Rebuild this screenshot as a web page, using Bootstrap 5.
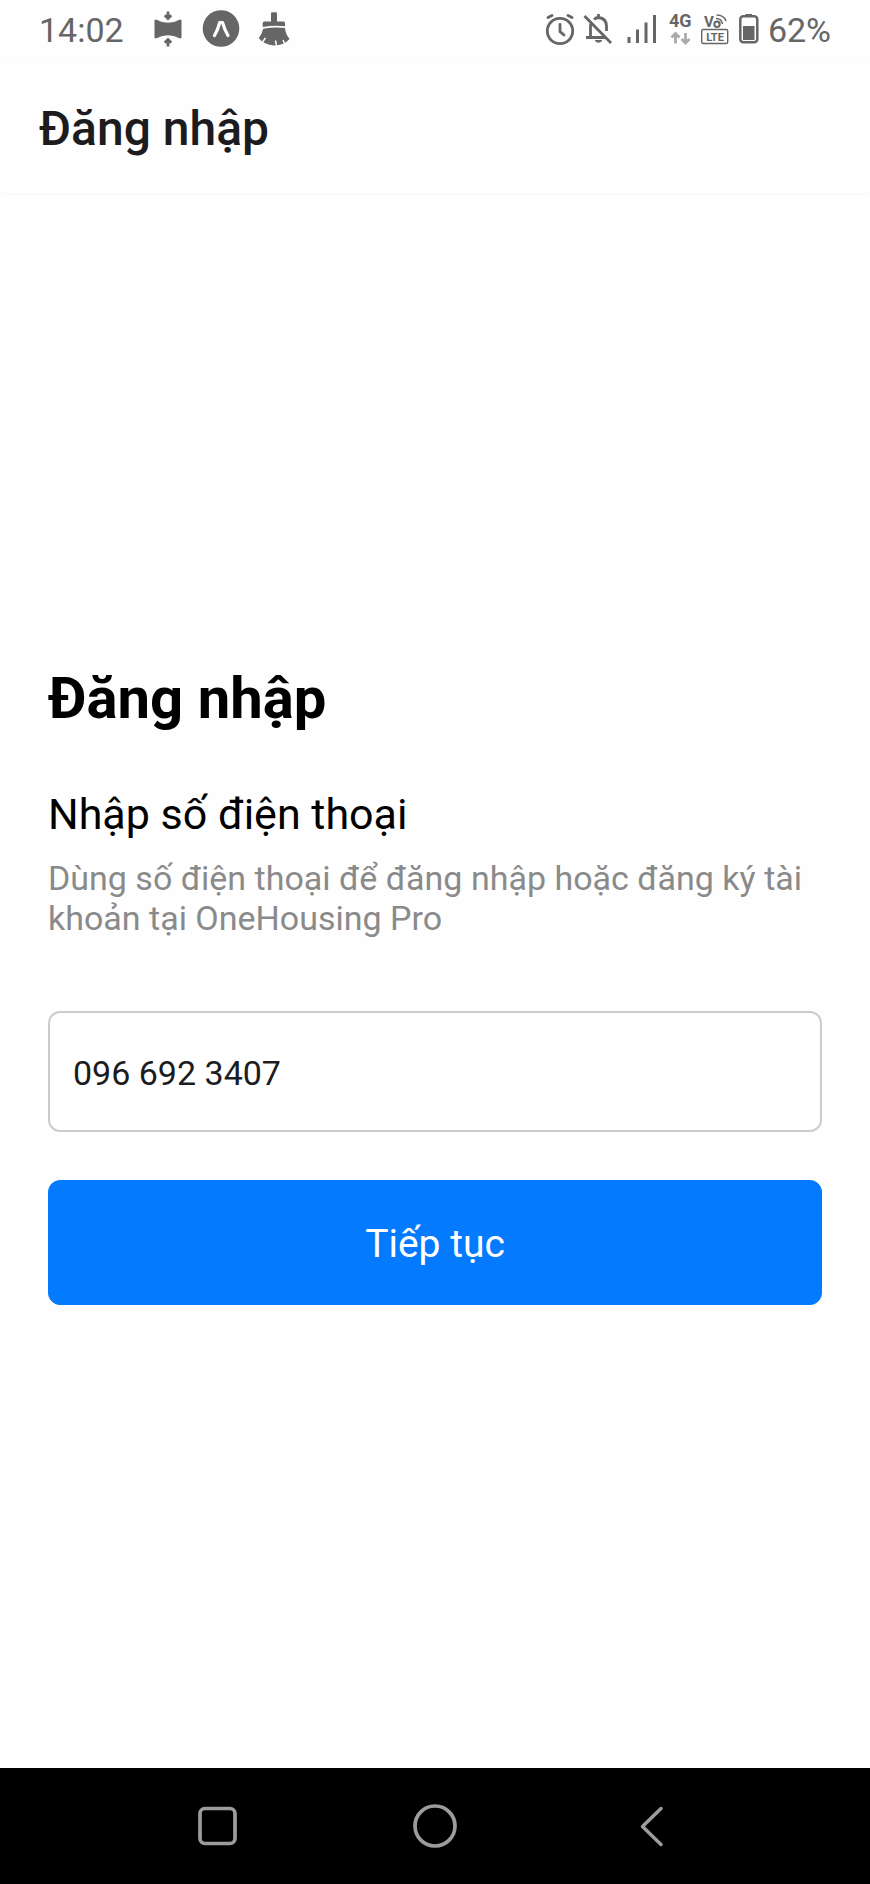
<!DOCTYPE html>
<html lang="vi">
<head>
<meta charset="utf-8">
<meta name="viewport" content="width=device-width, initial-scale=1">
<title>Đăng nhập</title>
<link rel="stylesheet" href="https://cdn.jsdelivr.net/npm/bootstrap@5.3.0/dist/css/bootstrap.min.css">
<style>
  body { font-family: Roboto, "Noto Sans", sans-serif; background: #fefefe; color: #000; }
  svg { display: block; flex: none; }
  .status-bar { height: 60px; padding: 0 39px; font-size: 34px; line-height: 40px; color: #666; }
  .status-left { gap: 13px; }
  .status-left time { margin-right: 11px; }
  .app-header { height: 133px; padding: 4px 39px 0; box-shadow: 0 1px 3px rgba(0, 0, 0, .03); }
  .app-title { font-size: 48px; line-height: 56px; font-weight: 500; color: #1c1c1e; }
  .login-form { padding: 0 48px; }
  .login-heading { font-size: 58px; line-height: 84px; font-weight: 700; margin-bottom: 46px; }
  .login-label { font-size: 43px; line-height: 56px; margin-bottom: 16px; }
  .login-hint { font-size: 34px; line-height: 40px; color: #8a8a8a; margin-bottom: 73px; }
  .phone-input { height: 121px; padding: 2px 23px 0; font-size: 34px; color: #1c1c1e; border: 2px solid #ccc; border-radius: 12px; background: #fff; margin-bottom: 48px; }
  .submit-btn { height: 125px; padding: 9px 12px 6px; font-size: 39px; line-height: 48px; border-radius: 12px; --bs-btn-bg: #047aff; --bs-btn-border-color: #047aff; }
  .system-nav { height: 116px; padding: 0 12.5%; background: #000; }
  .system-nav svg { margin: auto; }
</style>
</head>
<body class="d-flex flex-column min-vh-100">
  <div class="status-bar d-flex justify-content-between align-items-center">
    <div class="status-left d-flex align-items-center">
      <time>14:02</time>
      <svg width="40" height="48" viewBox="0 0 40 48" fill="#666" aria-hidden="true">
        <path d="M6.500 15Q6.500 13.200 8.500 13.700Q20 20 31.500 13.700Q33.500 13.200 33.500 15V31Q33.500 32.800 31.500 32.300Q20 26 8.500 32.300Q6.500 32.800 6.500 31Z"/>
        <path d="M20 5.500v6M16.800 9.300L20 12.500l3.200-3.200M20 40.500v-6M16.800 36.700L20 33.500l3.200 3.200" fill="none" stroke="#666" stroke-width="2.800"/>
      </svg>
      <svg width="40" height="48" viewBox="0 0 40 48" aria-hidden="true">
        <circle cx="20" cy="22.500" r="18.300" fill="#666"/>
        <path d="M13.500 29.500Q17 23.500 18.700 16.500H21.500Q23.500 23.500 27 29.500" fill="none" stroke="#fff" stroke-width="3.200" stroke-linecap="round" stroke-linejoin="round"/>
      </svg>
      <svg width="40" height="48" viewBox="0 0 40 48" fill="#666" aria-hidden="true">
        <path d="M17 7.500Q17 6.300 18.200 6.300H21.800Q23 6.300 23 7.500V15.500H29.500Q31 15.500 31 17V20.200Q20 19 8.700 21V17Q8.700 15.500 10.200 15.500H17Z"/>
        <path d="M9.200 22.800Q20 20.800 31 22Q31.500 28 35.500 33Q30 39.500 20 39.500Q10 39 4.700 32Q8 28.500 9.200 22.800Z"/>
        <path d="M11.500 32L8.500 36M21.500 34.500L22.500 40M29 34L31 38.500" fill="none" stroke="#fefefe" stroke-width="1.500"/>
      </svg>
    </div>
    <div class="d-flex align-items-center gap-2">
      <svg width="30" height="48" viewBox="0 0 30 48" fill="none" stroke="#666" stroke-width="2.800" stroke-linecap="round" aria-hidden="true">
        <circle cx="15" cy="25" r="12.700"/>
        <path d="M15 18.500v7l4 3.500M3 11.500L7 9.500M27 11.500L23 9.500"/>
      </svg>
      <svg width="30" height="48" viewBox="0 0 30 48" fill="none" stroke="#666" stroke-width="2.800" aria-hidden="true">
        <path d="M1.500 10L28 37M3 31.500H22M7.500 31V20Q7.500 18 8.500 16.500M11 13.500Q13 11.500 15.500 11.500Q23.500 12.500 23.500 20V25M15.500 8v4"/>
        <path d="M12 34.500Q15.500 38 19 34.500Z" fill="#666" stroke-width="1"/>
      </svg>
      <svg width="39" height="48" viewBox="0 0 39 48" fill="none" stroke="#666" stroke-width="3" aria-hidden="true">
        <path d="M8 37V31M16.500 37V23.500M25 37V16.500M33.500 37V9"/>
      </svg>
      <svg width="24" height="48" viewBox="0 0 24 48" aria-label="4G">
        <text x="1" y="21" font-size="18" font-weight="700" fill="#666">4G</text>
        <path d="M7.500 37.500V28M3.500 31.500L7.500 27.500L11.500 31.500M17.500 27V36.500M13.500 33L17.500 37L21.500 33" fill="none" stroke="#aaa" stroke-width="2.800"/>
      </svg>
      <svg width="30" height="48" viewBox="0 0 30 48" aria-label="VoLTE">
        <text x="4" y="21" font-size="15" font-weight="700" fill="#666">V</text>
        <g fill="none" stroke="#666">
          <circle cx="17" cy="18.200" r="2.700" stroke-width="2"/>
          <path d="M16 12.500Q21.500 12.500 22.500 18M16.500 9Q24 9 26 15" stroke-width="1.500"/>
          <rect x="1.700" y="23.500" width="26" height="14" rx="1.500" stroke-width="1.400"/>
        </g>
        <text x="15" y="34.500" font-size="11" font-weight="700" text-anchor="middle" fill="#666">LTE</text>
      </svg>
      <svg width="22" height="48" viewBox="0 0 22 48" aria-hidden="true">
        <rect x="2.300" y="10.200" width="17" height="26" rx="3" fill="none" stroke="#666" stroke-width="2.500"/>
        <path d="M7.500 8h6.500v2h-6.500zM5 20h11.500v14h-11.500z" fill="#666"/>
      </svg>
      <span>62%</span>
    </div>
  </div>

  <header class="app-header d-flex align-items-center">
    <div class="app-title">Đăng nhập</div>
  </header>

  <main class="flex-grow-1 d-flex flex-column justify-content-center">
    <form class="login-form d-flex flex-column">
      <h1 class="login-heading">Đăng nhập</h1>
      <label class="login-label" for="phone">Nhập số điện thoại</label>
      <p class="login-hint" id="phone-hint">Dùng số điện thoại để đăng nhập hoặc đăng ký tài khoản tại OneHousing Pro</p>
      <input class="form-control phone-input" type="tel" id="phone" value="096 692 3407" aria-describedby="phone-hint">
      <button class="btn btn-primary submit-btn w-100" type="button">Tiếp tục</button>
    </form>
  </main>

  <nav class="system-nav d-flex align-items-center" aria-label="Điều hướng">
    <button class="btn p-0 border-0 flex-fill" type="button" aria-label="Gần đây">
      <svg width="44" height="44" viewBox="0 0 44 44" fill="none" stroke="#9c9c9c" stroke-width="3.700"><rect x="4" y="4.500" width="35" height="35" rx="5"/></svg>
    </button>
    <button class="btn p-0 border-0 flex-fill" type="button" aria-label="Trang chủ">
      <svg width="44" height="44" viewBox="0 0 44 44" fill="none" stroke="#9c9c9c" stroke-width="3.700"><circle cx="22" cy="22" r="20"/></svg>
    </button>
    <button class="btn p-0 border-0 flex-fill" type="button" aria-label="Quay lại">
      <svg width="44" height="44" viewBox="0 0 44 44" fill="none" stroke="#9c9c9c" stroke-width="3.500" stroke-linecap="round" stroke-linejoin="round"><path d="M30 4.500L11.500 22.500L30 40.500"/></svg>
    </button>
  </nav>
  <script src="https://cdn.jsdelivr.net/npm/bootstrap@5.3.0/dist/js/bootstrap.bundle.min.js"></script>
</body>
</html>
